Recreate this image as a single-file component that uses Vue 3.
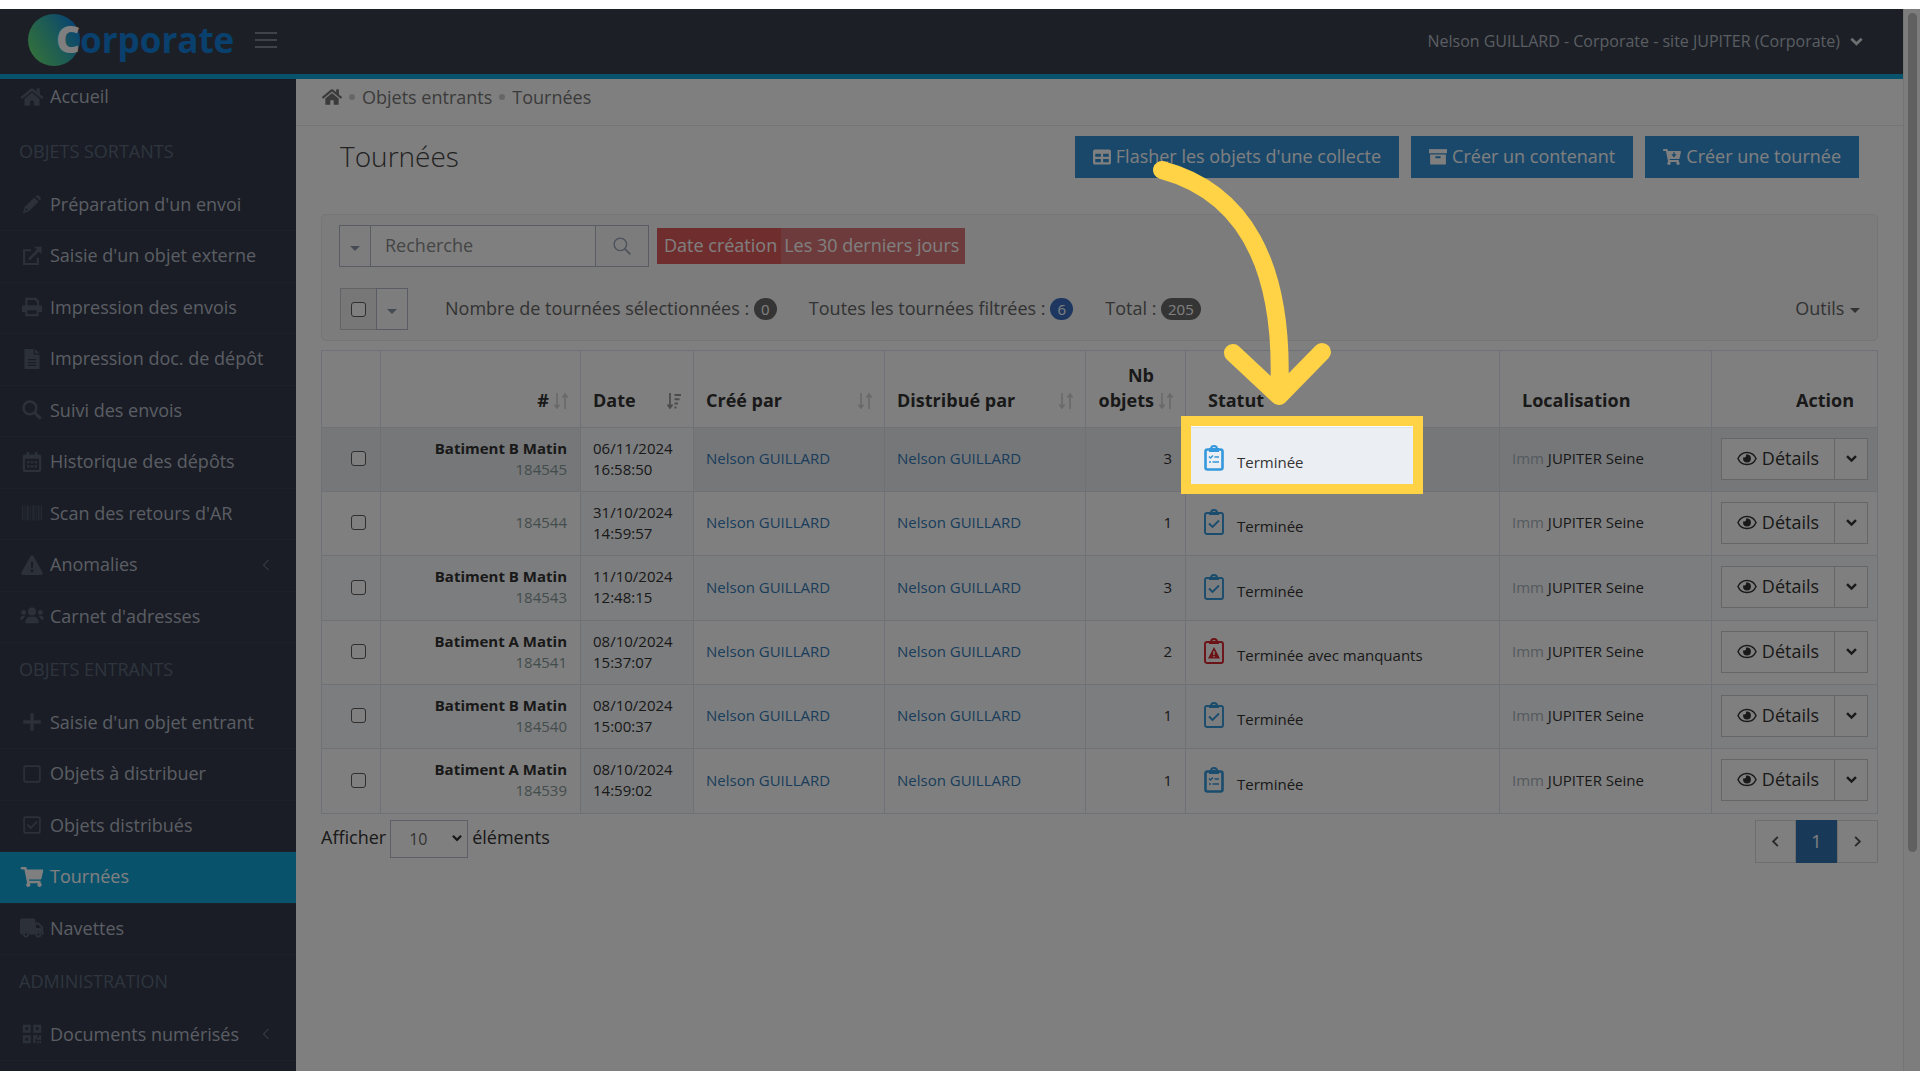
<script setup>
import { ref } from 'vue'

const icons = {
  home: { box: '0 0 576 512', svg: '<path d="M280.37 148.26L96 300.11V464a16 16 0 0 0 16 16l112.06-.29a16 16 0 0 0 15.92-16V368a16 16 0 0 1 16-16h64a16 16 0 0 1 16 16v95.64a16 16 0 0 0 16 16.05L464 480a16 16 0 0 0 16-16V300L295.67 148.26a12.19 12.19 0 0 0-15.3 0zM571.6 251.47L488 182.56V44.05a12 12 0 0 0-12-12h-56a12 12 0 0 0-12 12v72.61L318.47 43a48 48 0 0 0-61 0L4.34 251.47a12 12 0 0 0-1.6 16.9l25.5 31A12 12 0 0 0 45.15 301l235.22-193.74a12.19 12.19 0 0 1 15.3 0L530.9 301a12 12 0 0 0 16.9-1.6l25.5-31a12 12 0 0 0-1.7-16.93z"/>' },
  pencil: { box: '0 0 24 24', svg: '<path d="M14.800 4.200 19.800 9.200 8.300 20.700 1 23l2.300-7.300zM16.300 2.700c1.400-1.500 3-1.700 4.200-.5l1.300 1.300c1.200 1.200 1 2.800-.5 4.200z"/><path d="M4.800 16.800l2.400 2.400-2.800.9-.5-.5z" fill="#343b4a"/>' },
  external: { box: '0 0 24 24', svg: '<path d="M11 5H2.500v16.500H19V14" fill="none" stroke="currentColor" stroke-width="2.400"/><path d="M8.500 16 20 4.500" stroke="currentColor" stroke-width="3"/><path d="M14.500 1H23.500v9z"/>' },
  print: { box: '0 0 24 24', svg: '<path fill-rule="evenodd" d="M4 1h13l3.500 3.500V10H22a2 2 0 0 1 2 2v6h-4v5H4v-5H0v-6a2 2 0 0 1 2-2h2zm2.500 2.500V10H18V5.500h-2v-2zM6.500 16v4.500h11V16z"/>' },
  file: { box: '0 0 24 24', svg: '<path fill-rule="evenodd" d="M3 0h11v7h7v17H3zM7 12v1.500h10V12zm0 3.500V17h10v-1.500zM7 19v1.500h10V19z"/><path d="M15.500 0 21 5.500h-5.500z"/>' },
  search: { box: '0 0 24 24', svg: '<circle cx="9.500" cy="9.500" r="7.700" fill="none" stroke="currentColor" stroke-width="3"/><path d="m15 15 7.500 7.500" stroke="currentColor" stroke-width="3.600"/>' },
  calendar: { box: '0 0 24 24', svg: '<path fill-rule="evenodd" d="M5.500 0h3v3h7V0h3v3H21a2 2 0 0 1 2 2v17a2 2 0 0 1-2 2H3a2 2 0 0 1-2-2V5a2 2 0 0 1 2-2h2.500zM3.500 8v13.500h17V8z"/><path d="M6 11h3v2.500H6zm4.500 0h3v2.500h-3zm4.500 0h3v2.500h-3zM6 16h3v2.500H6zm4.500 0h3v2.500h-3zm4.500 0h3v2.500h-3z"/>' },
  barcode: { box: '0 0 24 24', svg: '<path d="M0 3h1.500v18H0zm3 0h1v18H3zm2.500 0H8v18H5.500zm4 0h1v18h-1zm3 0H15v18h-2.500zm4 0h1v18h-1zM19 3h2v18h-2zm3.500 0H24v18h-1.500z"/>' },
  warning: { box: '0 0 26 24', svg: '<path fill-rule="evenodd" d="M11.300 1.300c.8-1.300 2.600-1.300 3.400 0L25.700 21c.8 1.300-.2 3-1.700 3H2c-1.500 0-2.500-1.700-1.700-3zM11.500 8l.5 7.500h2l.5-7.500zM13 17a1.800 1.800 0 1 0 0 3.600 1.800 1.800 0 0 0 0-3.600z"/>' },
  users: { box: '0 0 30 24', svg: '<circle cx="15" cy="6.500" r="5"/><path d="M6.500 21c0-5 3-8 6-8h5c3 0 6 3 6 8z"/><circle cx="4.500" cy="7.500" r="3"/><circle cx="25.500" cy="7.500" r="3"/><path d="M0 16.500c0-3 2-4.700 4-4.700h3c-1.500 1.200-2.600 2.700-3 4.700zM30 16.500c0-3-2-4.700-4-4.700h-3c1.500 1.200 2.600 2.700 3 4.700z"/>' },
  plus: { box: '0 0 24 24', svg: '<path d="M10 1.500h4V10h8.500v4H14v8.500h-4V14H1.500v-4H10z"/>' },
  square: { box: '0 0 24 24', svg: '<rect x="2.500" y="2.500" width="19" height="19" rx="2" fill="none" stroke="currentColor" stroke-width="2"/>' },
  squareCheck: { box: '0 0 24 24', svg: '<rect x="2.500" y="2.500" width="19" height="19" rx="2" fill="none" stroke="currentColor" stroke-width="2"/><path d="m6.500 11.500 4 4 7.500-7.500" fill="none" stroke="currentColor" stroke-width="2.200"/>' },
  cart: { box: '0 0 576 512', svg: '<path d="M528.12 301.319l47.273-208C578.806 78.301 567.391 64 551.99 64H159.208l-9.166-44.81C147.758 8.021 137.93 0 126.529 0H24C10.745 0 0 10.745 0 24v16c0 13.255 10.745 24 24 24h69.883l70.248 343.435C147.325 417.1 136 435.222 136 456c0 30.928 25.072 56 56 56s56-25.072 56-56c0-15.674-6.447-29.835-16.824-40h209.647C430.447 426.165 424 440.326 424 456c0 30.928 25.072 56 56 56s56-25.072 56-56c0-22.172-12.888-41.332-31.579-50.405l5.517-24.276c3.413-15.018-8.002-29.319-23.403-29.319H218.117l-6.545-32h293.145c11.206 0 20.92-7.754 23.403-18.681z"/>' },
  cartPlus: { box: '0 0 576 512', svg: '<path d="M528.12 301.319l47.273-208C578.806 78.301 567.391 64 551.99 64H159.208l-9.166-44.81C147.758 8.021 137.93 0 126.529 0H24C10.745 0 0 10.745 0 24v16c0 13.255 10.745 24 24 24h69.883l70.248 343.435C147.325 417.1 136 435.222 136 456c0 30.928 25.072 56 56 56s56-25.072 56-56c0-15.674-6.447-29.835-16.824-40h209.647C430.447 426.165 424 440.326 424 456c0 30.928 25.072 56 56 56s56-25.072 56-56c0-22.172-12.888-41.332-31.579-50.405l5.517-24.276c3.413-15.018-8.002-29.319-23.403-29.319H218.117l-6.545-32h293.145c11.206 0 20.92-7.754 23.403-18.681z"/><path d="M330 105h44v64h62l-84 100-84-100h62z" fill="#3490d6"/>' },
  truck: { box: '0 0 30 24', svg: '<path fill-rule="evenodd" d="M2 0h15a2 2 0 0 1 2 2v3h3.500c.6 0 1 .2 1.500.7l4.200 4.500c.5.500.8 1 .8 1.800V18h1v2h-2.500a4.300 4.300 0 0 0-8.500 0h-7a4.300 4.300 0 0 0-8.500 0H2a2 2 0 0 1-2-2V2a2 2 0 0 1 2-2zm18 7.500V12h6.500L22.500 7.500z"/><path fill-rule="evenodd" d="M7.500 16.500a3.700 3.700 0 1 0 0 7.400 3.700 3.700 0 0 0 0-7.400zm0 2.200a1.500 1.500 0 1 1 0 3 1.500 1.500 0 0 1 0-3zM23 16.500a3.700 3.700 0 1 0 0 7.400 3.700 3.700 0 0 0 0-7.400zm0 2.200a1.500 1.500 0 1 1 0 3 1.500 1.500 0 0 1 0-3z"/>' },
  qr: { box: '0 0 24 24', svg: '<path fill-rule="evenodd" d="M1 1h9.500v9.500H1zm3 3v3.500h3.500V4zM13.500 1H23v9.500h-9.500zm3 3v3.500H20V4zM1 13.500h9.500V23H1zm3 3V20h3.500v-3.500zM13.500 13.500h5v3h2v-3H23v5.500h-5v-2h-1.800V23h-2.700zM18 20.500h2V23h-2zm3 0h2V23h-2z"/>' },
  table: { box: '0 0 24 24', svg: '<path fill-rule="evenodd" d="M2.500 2h19A2.500 2.500 0 0 1 24 4.500v15a2.500 2.500 0 0 1-2.500 2.500h-19A2.500 2.500 0 0 1 0 19.500v-15A2.500 2.500 0 0 1 2.500 2zM3 7.500v4.200h7.500V7.500zm10.500 0v4.200H21V7.500zM3 14.500V19h7.500v-4.500zm10.500 0V19H21v-4.500z"/>' },
  archive: { box: '0 0 24 24', svg: '<path d="M0 1.500h24V7H0z"/><path fill-rule="evenodd" d="M1.500 8.500h21V22h-21zM8.500 11v2.500h7V11z"/>' },
  eye: { box: '0 0 28 20', svg: '<path d="M14 1.500C7.500 1.500 3 6 1.300 10c1.700 4 6.200 8.500 12.700 8.500S25 14 26.700 10C25 6 20.500 1.500 14 1.500z" fill="none" stroke="currentColor" stroke-width="2"/><path d="M14 4.500a5.500 5.500 0 1 1-5.500 5.500c0-.6.100-1.200.3-1.700 2.500 1 4.700-1 3.700-3.600.5-.1 1-.2 1.500-.2z"/>' },
  chevron: { box: '0 0 16 16', svg: '<path d="m2.500 5 5.500 5.500L13.500 5" fill="none" stroke="currentColor" stroke-width="3"/>' },
  left: { box: '0 0 16 16', svg: '<path d="M10.500 3 5.500 8l5 5" fill="none" stroke="currentColor" stroke-width="2"/>' },
  right: { box: '0 0 16 16', svg: '<path d="m5.500 3 5 5-5 5" fill="none" stroke="currentColor" stroke-width="2"/>' },
  angle: { box: '0 0 16 16', svg: '<path d="M10.500 3 5.500 8l5 5" fill="none" stroke="currentColor" stroke-width="1"/>' },
  magnifier: { box: '0 0 24 24', svg: '<circle cx="10" cy="10" r="7.500" fill="none" stroke="currentColor" stroke-width="1.600"/><path d="m15.500 15.500 6.500 6.500" stroke="currentColor" stroke-width="1.900"/>' },
  sort: { box: '0 0 14 16', svg: '<path d="M3 0v14M.5 11.500 3 15l2.500-3.500" fill="none" stroke="currentColor" stroke-width="1.600"/><path d="M11 16V2M8.500 4.500 11 1l2.500 3.500" fill="none" stroke="currentColor" stroke-width="1.600"/>' },
  sortDesc: { box: '0 0 14 16', svg: '<path d="M3 0v14M.5 11.500 3 15l2.500-3.500" fill="none" stroke="currentColor" stroke-width="1.800"/><path d="M7.500 1H14v2H7.500zm0 4.200h5v2h-5zm0 4.200h3.500v2H7.500zm0 4.200h2v2h-2z"/>' },
  list: { box: '0 0 20 26', svg: '<path d="M7 4a3 3 0 0 1 6 0" fill="none" stroke="currentColor" stroke-width="2"/><path d="M5 3h10v4H5z"/><rect x="1.500" y="4.500" width="17" height="20" rx="2" fill="none" stroke="currentColor" stroke-width="2.600"/><path d="m5 11.500 1.500 1.500L9 10.500M10.500 12H15M5 17h2M8.500 17H15" fill="none" stroke="currentColor" stroke-width="1.500"/>' },
  check: { box: '0 0 20 26', svg: '<path d="M7 4a3 3 0 0 1 6 0" fill="none" stroke="currentColor" stroke-width="2"/><path d="M5 3h10v3H5z"/><rect x="1" y="4" width="18" height="21" rx="2" fill="none" stroke="currentColor" stroke-width="1.900"/><path d="m5 14.500 3.500 3.500L15 11.500" fill="none" stroke="currentColor" stroke-width="1.900"/>' },
  alert: { box: '0 0 20 26', svg: '<path d="M7 4a3 3 0 0 1 6 0" fill="none" stroke="currentColor" stroke-width="2"/><path d="M5 3h10v3H5z"/><rect x="1" y="4" width="18" height="21" rx="2" fill="none" stroke="currentColor" stroke-width="1.900"/><path fill-rule="evenodd" d="M10 9l6 11.500H4zM9.300 13v4h1.400v-4zm0 5v1.300h1.400V18z"/>' },
}

const groups = [
  {
    title: 'OBJETS SORTANTS',
    items: [
      ['pencil', "Préparation d'un envoi"],
      ['external', "Saisie d'un objet externe"],
      ['print', 'Impression des envois'],
      ['file', 'Impression doc. de dépôt'],
      ['search', 'Suivi des envois'],
      ['calendar', 'Historique des dépôts'],
      ['barcode', "Scan des retours d'AR"],
      ['warning', 'Anomalies', true],
      ['users', "Carnet d'adresses"],
    ],
  },
  {
    title: 'OBJETS ENTRANTS',
    items: [
      ['plus', "Saisie d'un objet entrant"],
      ['square', 'Objets à distribuer'],
      ['squareCheck', 'Objets distribués'],
      ['cart', 'Tournées'],
      ['truck', 'Navettes'],
    ],
  },
  { title: 'ADMINISTRATION', items: [['qr', 'Documents numérisés', true]] },
]

const rows = [
  { name: 'Batiment B Matin', id: '184545', date: '06/11/2024', time: '16:58:50', count: 3, icon: 'list', status: 'Terminée' },
  { name: '', id: '184544', date: '31/10/2024', time: '14:59:57', count: 1, icon: 'check', status: 'Terminée' },
  { name: 'Batiment B Matin', id: '184543', date: '11/10/2024', time: '12:48:15', count: 3, icon: 'check', status: 'Terminée' },
  { name: 'Batiment A Matin', id: '184541', date: '08/10/2024', time: '15:37:07', count: 2, icon: 'alert', status: 'Terminée avec manquants' },
  { name: 'Batiment B Matin', id: '184540', date: '08/10/2024', time: '15:00:37', count: 1, icon: 'check', status: 'Terminée' },
  { name: 'Batiment A Matin', id: '184539', date: '08/10/2024', time: '14:59:02', count: 1, icon: 'list', status: 'Terminée' },
]

const active = ref('Tournées')
const query = ref('')
const pageSize = ref('10')
</script>

<template>
  <div class="stage">
    <header class="topbar">
      <a class="brand" href="#" aria-label="Corporate">
        <span class="disc">C</span><span class="word">orporate</span>
      </a>
      <button class="burger" type="button" aria-label="Menu"><i></i><i></i><i></i></button>
      <button class="user" type="button">
        Nelson GUILLARD - Corporate - site JUPITER (Corporate)
        <svg class="ico" :viewBox="icons.chevron.box" v-html="icons.chevron.svg"></svg>
      </button>
    </header>

    <div class="body">
      <nav class="sidebar">
        <a class="item first" href="#">
          <svg class="ico" :viewBox="icons.home.box" v-html="icons.home.svg"></svg>Accueil
        </a>
        <section v-for="g in groups" :key="g.title">
          <h2>{{ g.title }}</h2>
          <ul>
            <li v-for="[icon, label, more] in g.items" :key="label">
              <a class="item" :class="{ active: label === active }" href="#" @click.prevent="active = label">
                <svg class="ico" :class="icon" :viewBox="icons[icon].box" v-html="icons[icon].svg"></svg>{{ label }}
                <svg v-if="more" class="more" :viewBox="icons.angle.box" v-html="icons.angle.svg"></svg>
              </a>
            </li>
          </ul>
        </section>
      </nav>

      <main>
        <nav class="crumbs" aria-label="Fil d'Ariane">
          <a href="#" aria-label="Accueil"><svg class="ico" :viewBox="icons.home.box" v-html="icons.home.svg"></svg></a>
          <i></i><a href="#">Objets entrants</a><i></i><span>Tournées</span>
        </nav>

        <div class="title-row">
          <h1>Tournées</h1>
          <div class="actions">
            <button type="button"><svg :viewBox="icons.table.box" v-html="icons.table.svg"></svg>Flasher les objets d'une collecte</button>
            <button type="button"><svg :viewBox="icons.archive.box" v-html="icons.archive.svg"></svg>Créer un contenant</button>
            <button type="button"><svg :viewBox="icons.cartPlus.box" v-html="icons.cartPlus.svg"></svg>Créer une tournée</button>
          </div>
        </div>

        <section class="filters">
          <div class="line">
            <div class="search">
              <button class="drop" type="button" aria-label="Champs de recherche"><b class="caret"></b></button>
              <input v-model="query" type="text" placeholder="Recherche" aria-label="Recherche" />
              <button class="go" type="button" aria-label="Rechercher">
                <svg :viewBox="icons.magnifier.box" v-html="icons.magnifier.svg"></svg>
              </button>
            </div>
            <div class="tag"><span>Date création</span><span>Les 30 derniers jours</span></div>
          </div>
          <div class="line stats">
            <div class="pick">
              <label><input type="checkbox" aria-label="Tout sélectionner" /></label>
              <button class="drop" type="button" aria-label="Options de sélection"><b class="caret"></b></button>
            </div>
            <span>Nombre de tournées sélectionnées : <em>0</em></span>
            <span>Toutes les tournées filtrées : <em class="blue">6</em></span>
            <span>Total : <em>205</em></span>
            <button class="tools" type="button">Outils <b class="caret"></b></button>
          </div>
        </section>

        <table>
          <colgroup>
            <col class="c1" /><col class="c2" /><col class="c3" /><col class="c4" /><col class="c5" />
            <col class="c6" /><col class="c7" /><col class="c8" /><col class="c9" />
          </colgroup>
          <thead>
            <tr>
              <th></th>
              <th><div class="head end">#<svg :viewBox="icons.sort.box" v-html="icons.sort.svg"></svg></div></th>
              <th><div class="head">Date<svg class="on" :viewBox="icons.sortDesc.box" v-html="icons.sortDesc.svg"></svg></div></th>
              <th><div class="head">Créé par<svg :viewBox="icons.sort.box" v-html="icons.sort.svg"></svg></div></th>
              <th><div class="head">Distribué par<svg :viewBox="icons.sort.box" v-html="icons.sort.svg"></svg></div></th>
              <th><div class="head end"><span>Nb objets</span><svg :viewBox="icons.sort.box" v-html="icons.sort.svg"></svg></div></th>
              <th class="wide">Statut</th>
              <th class="wide">Localisation</th>
              <th class="wide last">Action</th>
            </tr>
          </thead>
          <tbody>
            <tr v-for="(r, i) in rows" :key="r.id">
              <td class="tick"><input type="checkbox" :aria-label="'Sélectionner ' + r.id" /></td>
              <td class="num"><strong v-if="r.name">{{ r.name }}</strong><span>{{ r.id }}</span></td>
              <td class="date">{{ r.date }}<br />{{ r.time }}</td>
              <td><a href="#">Nelson GUILLARD</a></td>
              <td><a href="#">Nelson GUILLARD</a></td>
              <td class="count">{{ r.count }}</td>
              <td class="status">
                <div class="state">
                  <svg :class="{ red: r.icon === 'alert' }" :viewBox="icons[r.icon].box" v-html="icons[r.icon].svg"></svg>
                  <span>{{ r.status }}</span>
                </div>
                <div v-if="i === 0" class="spotlight">
                  <svg class="arrow" viewBox="0 0 200 260">
                    <path d="M21 14C99 35 145 104 138 240M92 197l46 43 43-44" />
                  </svg>
                </div>
              </td>
              <td><small>Imm</small> JUPITER Seine</td>
              <td class="act">
                <div class="split">
                  <button type="button"><svg :viewBox="icons.eye.box" v-html="icons.eye.svg"></svg>Détails</button>
                  <button class="toggle" type="button" aria-label="Plus d'actions"><svg :viewBox="icons.chevron.box" v-html="icons.chevron.svg"></svg></button>
                </div>
              </td>
            </tr>
          </tbody>
        </table>

        <footer class="foot">
          <div class="size">
            <label for="page-size">Afficher</label>
            <span class="select">
              <select id="page-size" v-model="pageSize"><option>10</option><option>25</option><option>50</option></select>
              <svg :viewBox="icons.chevron.box" v-html="icons.chevron.svg"></svg>
            </span>
            <span class="after">éléments</span>
          </div>
          <nav class="pager" aria-label="Pagination">
            <button type="button" aria-label="Page précédente"><svg :viewBox="icons.left.box" v-html="icons.left.svg"></svg></button>
            <button type="button" class="current">1</button>
            <button type="button" aria-label="Page suivante"><svg :viewBox="icons.right.box" v-html="icons.right.svg"></svg></button>
          </nav>
        </footer>
      </main>
      <div class="scroll" aria-hidden="true"><div class="thumb"></div></div>
    </div>
  </div>
</template>

<style>
body { background: #fff; }
</style>

<style scoped>
*, *::before, *::after { box-sizing: border-box; }
.stage {
  position: relative;
  display: flex;
  flex-direction: column;
  min-height: calc(100vh - 18px);
  margin: 9px 0;
  overflow: hidden;
  background: #fff;
  color: #333;
  font: 18px/25px "Open Sans", "Noto Sans", sans-serif;
}
button, input, select { font: inherit; color: inherit; margin: 0; border-radius: 0; }
button { padding: 0; border: 0; background: none; cursor: pointer; }
a { color: inherit; text-decoration: none; }
svg { fill: currentColor; flex: none; display: block; }
h1, h2, ul { margin: 0; padding: 0; font-weight: 400; list-style: none; }

.topbar {
  display: flex;
  align-items: center;
  height: 70px;
  margin-right: 17px;
  padding: 0 39px 0 28px;
  background: #38404c;
  border-bottom: 5px solid #12a5d8;
}
.brand { display: flex; align-items: center; margin-bottom: 4px; font: 700 35px/50px "Open Sans", sans-serif; color: #1380dd; }
.disc {
  display: flex;
  justify-content: flex-end;
  width: 52px;
  height: 52px;
  border-radius: 50%;
  background: linear-gradient(60deg, #66e078 10%, #3cb9a8 50%, #158ce0 85%);
  color: #fff;
  font-size: 37px;
  font-weight: 800;
}
.burger { display: grid; gap: 5px; width: 22px; margin: 0 0 4px 21px; }
.burger i { height: 2px; background: #7c8798; }
.user { display: flex; align-items: center; gap: 9px; margin-left: auto; font-size: 16px; color: #b4bac4; }
.user .ico { width: 15px; height: 15px; color: #d8dce2; }

.body { display: flex; flex: 1; }
.sidebar { flex: none; width: 296px; background: #343b4a; color: #b4bcc8; }
.item { display: flex; align-items: center; height: 100%; padding: 0 0 2px 20px; }
.item .ico { width: 24px; height: 20px; margin-right: 6px; color: #586373; }
.item.first { height: 46px; padding-bottom: 11px; }
.item .barcode { color: #4a5464; }
.item .plus, .item .square, .item .squareCheck { color: #566172; }
.item .more { width: 16px; height: 16px; margin: 0 22px 0 auto; color: #8490a4; }
.sidebar h2 { height: 55px; padding-left: 19px; font-size: 18px; line-height: 52px; color: #5c6a7e; }
.sidebar li { height: 51px; border-bottom: 1px solid #3a4252; }
.sidebar li:nth-child(2n) { height: 52px; }
.item.active { background: #12a5d8; }
.item.active, .item.active .ico { color: #fff; }

main { flex: 1; min-width: 0; }
.crumbs { display: flex; align-items: center; height: 47px; padding: 0 0 10px 26px; border-bottom: 1px solid #e7ecf1; color: #777; }
.crumbs .ico { width: 20px; height: 20px; color: #777; }
.crumbs i { width: 6px; height: 6px; margin: 0 7px; border-radius: 50%; background: #ccc; }
.title-row { display: flex; justify-content: space-between; align-items: flex-start; padding: 10px 44px 0; height: 52px; }
h1 { font-size: 28px; font-weight: 300; line-height: 40px; color: #444; }
.actions { display: flex; gap: 12px; }
.actions button { display: flex; align-items: center; gap: 5px; height: 42px; padding: 0 18px 1px; background: #3490d6; color: #fff; }
.actions svg { width: 18px; height: 18px; }

.filters { margin: 36px 25px 9px; padding: 10px 17px; border: 1px solid #eaeaea; border-radius: 5px; background: #f8f8f8; }
.line { display: flex; align-items: center; height: 42px; }
.search, .pick { display: flex; height: 42px; }
.search > *, .pick > * { border: 1px solid #b3bac6; }
.drop { width: 32px; background: #fafafa; }
.caret { display: inline-block; border: 5px solid transparent; border-top-color: #8a97aa; border-bottom: 0; vertical-align: 2px; }
.search input { width: 226px; margin: 0 -1px; padding: 0 14px 2px; background: #fff; outline: 0; }
.search input::placeholder { color: #8b8b8b; opacity: 1; }
.go { display: grid; place-items: center; width: 54px; color: #96a3b5; }
.go svg { width: 20px; height: 20px; }
.tag { display: flex; margin-left: 8px; line-height: 35px; padding-bottom: 1px; color: #fff; background: #dd7778; }
.tag span { padding: 0 6px 0 3px; }
.tag span:first-child { margin-bottom: -1px; padding: 0 4px 0 7px; background: #e05b5c; }
.stats { margin-top: 21px; color: #666; }
.stats > span { margin-right: 32px; padding-bottom: 2px; }
.pick { margin: 0 37px 0 1px; }
.pick label { display: grid; place-items: center; width: 37px; margin-right: -1px; background: #eee; border-color: #c4c7cc; }
input[type="checkbox"] {
  appearance: none;
  width: 15px;
  height: 15px;
  border: 1px solid #5e5e5e;
  border-radius: 3px;
  background: #fff;
}
input[type="checkbox"]:checked { background: #337ab7; }
.stats em {
  display: inline-block;
  min-width: 23px;
  padding: 0 7px;
  border-radius: 11px;
  background: #6a6a6a;
  color: #fff;
  font-size: 15px;
  font-style: normal;
  line-height: 22px;
  text-align: center;
}
.stats em.blue { background: #3a6fc0; }
.tools { margin-left: auto; padding-bottom: 2px; }
.tools .caret { margin-left: 1px; border-top-color: #666; }

table { width: calc(100% - 50px); margin: 0 25px; border-collapse: collapse; table-layout: fixed; font-size: 15px; line-height: 21px; }
.c1 { width: 59px; } .c2 { width: 200px; } .c3 { width: 113px; } .c4 { width: 191px; } .c5 { width: 201px; }
.c6 { width: 100px; } .c7 { width: 314px; } .c8 { width: 212px; } .c9 { width: 166px; }
th, td { border: 1px solid #dde3ea; }
th { height: 77px; padding: 0 12px 14px; vertical-align: bottom; text-align: left; font-size: 18px; line-height: 25px; color: #333; }
th.wide { padding: 0 23px 14px 22px; }
th.last { text-align: right; }
.head { display: flex; align-items: flex-end; gap: 5px; white-space: nowrap; }
.head svg { width: 14px; height: 16px; margin: 0 0 4px auto; color: #d2d2d2; }
.head svg.on { color: #999; }
.head.end { justify-content: flex-end; text-align: right; }
.head.end svg { margin-left: 0; }
.head.end span { width: 58px; white-space: normal; }
tbody tr { height: 64px; }
tbody tr:nth-child(3n) { height: 65px; }
td { padding: 0 13px 2px 12px; }
tbody tr:nth-child(odd), .date { background: #f9fafd; }
tbody tr:nth-child(2n) .date { background: #f7f9fc; }
tbody tr:first-child { background: #ebeef3; }
tbody tr:first-child .date { background: #f8fafe; }
td a { color: #337ab7; }
.tick input { display: block; margin: 0 0 0 17px; }
.num, .count { text-align: right; }
.num span, .num strong { display: block; }
.num span { color: #879a98; }
.status { position: relative; padding: 0 18px 1px; }
.state { display: flex; align-items: flex-end; gap: 13px; }
.state svg { width: 20px; height: 26px; margin-bottom: 2px; color: #3598dc; }
.state svg.red { color: #d9262f; }
small { font-size: 15px; color: #a9b4bd; }
.act { padding: 0 9px 2px; }
.split { display: flex; justify-content: flex-end; }
.split button { display: flex; align-items: center; justify-content: center; gap: 5px; width: 114px; height: 42px; padding-bottom: 1px; border: 1px solid #ccc; background: #fff; font-size: 18px; }
.split .toggle { width: 34px; margin-left: -1px; }
.split svg { width: 20px; height: 15px; }
.split .toggle svg { width: 13px; height: 13px; }

.spotlight {
  position: absolute;
  z-index: 10;
  top: -12px;
  left: -5px;
  width: 242px;
  height: 78px;
  border: 10px solid #ffd345;
  box-shadow: 0 0 0 4000px rgba(0, 0, 0, 0.5);
  pointer-events: none;
}
.arrow {
  position: absolute;
  bottom: 68px;
  left: -50px;
  width: 200px;
  height: 260px;
  fill: none;
  stroke: #ffd345;
  stroke-width: 18;
  stroke-linecap: round;
  stroke-linejoin: round;
}

.foot { display: flex; justify-content: space-between; padding: 6px 25px; }
.size { display: flex; align-items: center; gap: 4px; height: 38px; }
.size label, .size .after { padding-bottom: 3px; }
.select { position: relative; }
.select select { appearance: none; display: block; width: 78px; height: 38px; padding: 0 18px; border: 1px solid #b9bfd0; background: #fff; font-size: 16px; color: #666; }
.select svg { position: absolute; right: 5px; top: 12px; width: 12px; height: 12px; pointer-events: none; }
.pager { display: flex; }
.pager button { display: grid; place-items: center; width: 41px; height: 43px; border: 1px solid #ddd; color: #555; }
.pager button.current { border-color: #3172b1; background: #3172b1; color: #fff; }
.pager svg { width: 15px; height: 15px; }

.scroll { flex: none; width: 17px; margin-top: -70px; padding: 4px 3px 0 4px; border-left: 1px solid #e8e8e8; background: #fafafa; }
.thumb { height: 839px; border-radius: 5px; background: #c1c1c1; }
</style>
